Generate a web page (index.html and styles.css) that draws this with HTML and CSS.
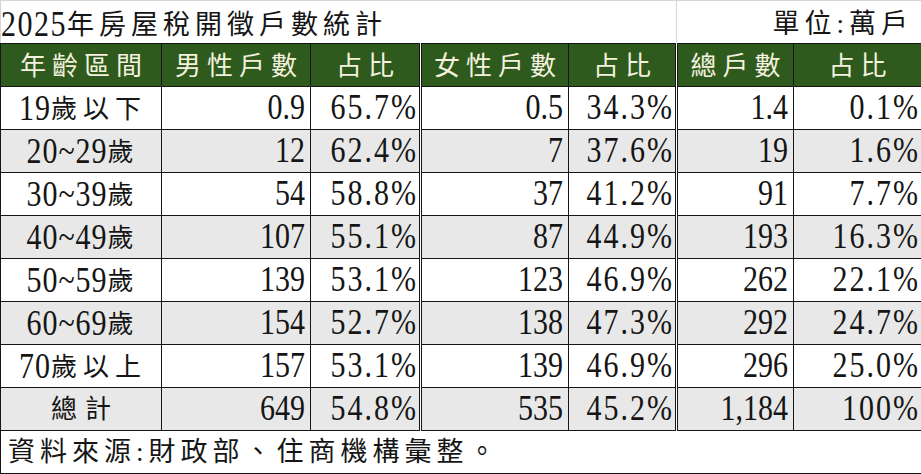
FILE: index.html
```html
<!DOCTYPE html>
<html lang="zh-Hant">
<head>
<meta charset="utf-8">
<title>2025年房屋稅開徵戶數統計</title>
<link rel="stylesheet" href="styles.css">
</head>
<body>
<table class="stats">
  <colgroup>
    <col class="w-age"><col class="w-m"><col class="w-mp"><col class="w-f"><col class="w-fp"><col class="w-t"><col class="w-tp">
  </colgroup>
  <tr class="title-row">
    <td colspan="5" class="title"><span class="num">2025</span>年房屋稅開徵戶數統計</td>
    <td colspan="2" class="unit">單位:萬戶</td>
  </tr>
  <tr class="head">
    <th>年齡區間</th><th>男性戶數</th><th class="dbl">占比</th><th>女性戶數</th><th class="dbl">占比</th><th>總戶數</th><th>占比</th>
  </tr>
  <tr>
    <td class="lbl"><span class="num">19</span>歲以下</td>
    <td class="cnt"><span class="num">0.9</span></td><td class="pct dbl"><span class="num">65.7%</span></td>
    <td class="cnt"><span class="num">0.5</span></td><td class="pct dbl"><span class="num">34.3%</span></td>
    <td class="cnt"><span class="num">1.4</span></td><td class="pct"><span class="num">0.1%</span></td>
  </tr>
  <tr class="alt">
    <td class="lbl"><span class="num">20~29</span>歲</td>
    <td class="cnt"><span class="num">12</span></td><td class="pct dbl"><span class="num">62.4%</span></td>
    <td class="cnt"><span class="num">7</span></td><td class="pct dbl"><span class="num">37.6%</span></td>
    <td class="cnt"><span class="num">19</span></td><td class="pct"><span class="num">1.6%</span></td>
  </tr>
  <tr>
    <td class="lbl"><span class="num">30~39</span>歲</td>
    <td class="cnt"><span class="num">54</span></td><td class="pct dbl"><span class="num">58.8%</span></td>
    <td class="cnt"><span class="num">37</span></td><td class="pct dbl"><span class="num">41.2%</span></td>
    <td class="cnt"><span class="num">91</span></td><td class="pct"><span class="num">7.7%</span></td>
  </tr>
  <tr class="alt">
    <td class="lbl"><span class="num">40~49</span>歲</td>
    <td class="cnt"><span class="num">107</span></td><td class="pct dbl"><span class="num">55.1%</span></td>
    <td class="cnt"><span class="num">87</span></td><td class="pct dbl"><span class="num">44.9%</span></td>
    <td class="cnt"><span class="num">193</span></td><td class="pct"><span class="num">16.3%</span></td>
  </tr>
  <tr>
    <td class="lbl"><span class="num">50~59</span>歲</td>
    <td class="cnt"><span class="num">139</span></td><td class="pct dbl"><span class="num">53.1%</span></td>
    <td class="cnt"><span class="num">123</span></td><td class="pct dbl"><span class="num">46.9%</span></td>
    <td class="cnt"><span class="num">262</span></td><td class="pct"><span class="num">22.1%</span></td>
  </tr>
  <tr class="alt">
    <td class="lbl"><span class="num">60~69</span>歲</td>
    <td class="cnt"><span class="num">154</span></td><td class="pct dbl"><span class="num">52.7%</span></td>
    <td class="cnt"><span class="num">138</span></td><td class="pct dbl"><span class="num">47.3%</span></td>
    <td class="cnt"><span class="num">292</span></td><td class="pct"><span class="num">24.7%</span></td>
  </tr>
  <tr>
    <td class="lbl"><span class="num">70</span>歲以上</td>
    <td class="cnt"><span class="num">157</span></td><td class="pct dbl"><span class="num">53.1%</span></td>
    <td class="cnt"><span class="num">139</span></td><td class="pct dbl"><span class="num">46.9%</span></td>
    <td class="cnt"><span class="num">296</span></td><td class="pct"><span class="num">25.0%</span></td>
  </tr>
  <tr class="alt">
    <td class="lbl total">總計</td>
    <td class="cnt"><span class="num">649</span></td><td class="pct dbl"><span class="num">54.8%</span></td>
    <td class="cnt"><span class="num">535</span></td><td class="pct dbl"><span class="num">45.2%</span></td>
    <td class="cnt"><span class="num">1,184</span></td><td class="pct"><span class="num">100%</span></td>
  </tr>
  <tr class="foot">
    <td colspan="7" class="source">資料來源:財政部、住商機構彙整。</td>
  </tr>
</table>
</body>
</html>
```

FILE: styles.css
```css
html, body {
  margin: 0;
  padding: 0;
  background: #ffffff;
}

body {
  font-family: "Liberation Serif", "Noto Sans CJK TC", serif;
  color: #151515;
}

.stats {
  border-collapse: collapse;
  table-layout: fixed;
  width: 921px;
}

.w-age { width: 161px; }
.w-m   { width: 149px; }
.w-mp  { width: 110px; }
.w-f   { width: 148px; }
.w-fp  { width: 108px; }
.w-t   { width: 117px; }
.w-tp  { width: 128px; }

.stats tr {
  height: 43px;
}

.stats td,
.stats th {
  border: 1px solid #161616;
  padding: 0;
  line-height: 32px;
  vertical-align: middle;
  white-space: nowrap;
  overflow: hidden;
}

.num {
  display: inline-block;
  font-size: 30px;
  letter-spacing: 0;
  transform: scaleY(1.18);
}

/* title row */
.title-row td {
  border-color: #d6d6d6;
  border-bottom: 1px solid #161616;
  font-size: 27px;
  letter-spacing: 5px;
  padding-top: 4px;
}

.title {
  text-align: left;
  padding-left: 7px;
}

.title .num {
  letter-spacing: 1.5px;
}

.unit {
  text-align: right;
  padding-right: 8px !important;
}

/* header */
.head th {
  background: #2e5a1d;
  color: #f4f1df;
  font-weight: normal;
  font-size: 26px;
  letter-spacing: 6px;
  padding-left: 6px;
  text-align: center;
  padding-top: 3px;
}

.stats .dbl {
  border-right: 3px double #161616;
}

/* body */
.alt td {
  background: #e8e8e8;
}

.lbl {
  text-align: center;
  font-size: 26px;
  letter-spacing: 6px;
  padding-left: 4px !important;
  padding-top: 2px !important;
}

.lbl .num {
  letter-spacing: 1px;
}

.total {
  letter-spacing: 8px;
  padding-left: 8px !important;
}

.cnt {
  text-align: right;
  padding-right: 5px !important;
  padding-top: 2px !important;
}

.pct {
  text-align: right;
  padding-right: 1px !important;
  padding-top: 2px !important;
}

.pct .num {
  letter-spacing: 2px;
}

/* footer */
.source {
  text-align: left;
  padding-left: 7px !important;
  font-size: 27px;
  letter-spacing: 5px;
  background: #ffffff;
}
```
